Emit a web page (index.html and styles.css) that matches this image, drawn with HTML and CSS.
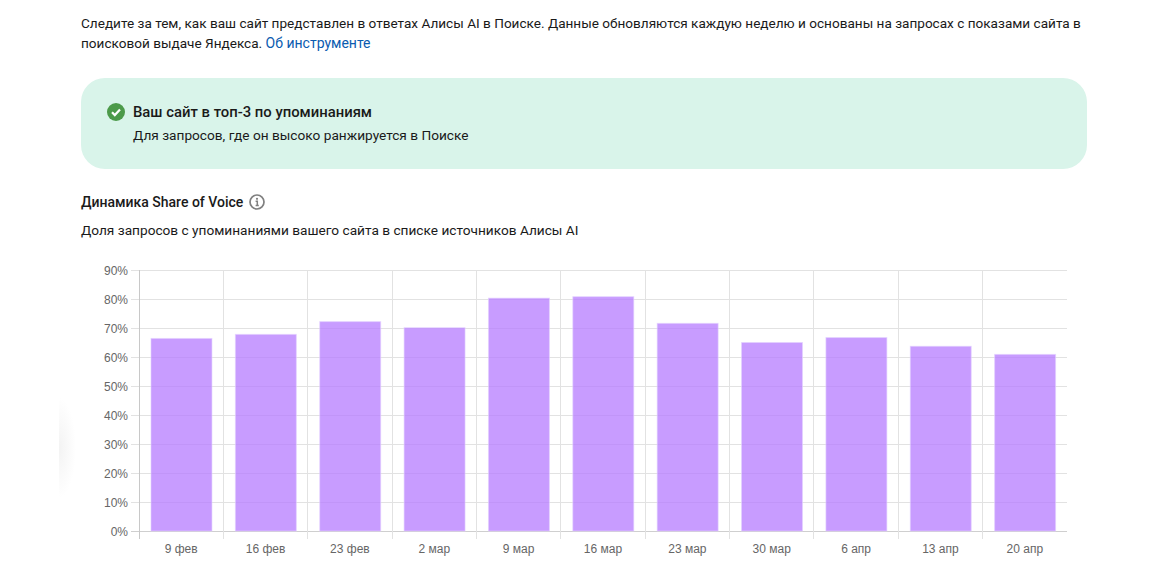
FILE: index.html
```html
<!DOCTYPE html>
<html lang="ru">
<head>
<meta charset="utf-8">
<title>Share of Voice</title>
<link rel="stylesheet" href="styles.css">
</head>
<body>
<div class="glow"></div>
<main class="page">
  <p class="intro">Следите за тем, как ваш сайт представлен в ответах Алисы AI в Поиске. Данные обновляются каждую неделю и основаны на запросах с показами сайта в поисковой выдаче Яндекса. <a href="#">Об инструменте</a></p>
  <section class="banner">
    <svg class="check" width="18" height="18" viewBox="0 0 18 18"><circle cx="9" cy="9" r="9" fill="#4c9a4a"/><path d="M5 9.3l2.8 2.8L13 6.6" fill="none" stroke="#fff" stroke-width="2.2"/></svg>
    <div class="banner-text">
      <div class="banner-title">Ваш сайт в топ-3 по упоминаниям</div>
      <div class="banner-sub">Для запросов, где он высоко ранжируется в Поиске</div>
    </div>
  </section>
  <h2 class="heading">Динамика Share of Voice
    <svg class="info" width="16" height="16" viewBox="0 0 16 16"><circle cx="8" cy="8" r="7" fill="none" stroke="#808080" stroke-width="1.700"/><circle cx="8" cy="4.800" r="1.100" fill="#808080"/><path d="M6.600 7.300H8.300V11.300M6.600 11.500H9.800" fill="none" stroke="#808080" stroke-width="1.500"/></svg>
  </h2>
  <p class="caption">Доля запросов с упоминаниями вашего сайта в списке источников Алисы AI</p>
  <svg class="chart" id="chart" width="1000" height="306" viewBox="81 260 1000 306"></svg>
</main>
<script src="chart.js"></script>
</body>
</html>
```
FILE: styles.css
```css
* { box-sizing: border-box; }
html, body { margin: 0; height: 581px; overflow: hidden; background: #fff; }
body { position: relative; font-family: "Roboto", "Noto Sans", sans-serif; color: #1a1a1a; }
.page { width: 1006px; margin-left: 81px; padding-top: 13px; }
.intro { margin: 0; font-size: 13.58px; line-height: 20px; height: 40px; }
.intro a { color: #0a5bb0; text-decoration: none; font-size: 14px; }
.banner { display: flex; align-items: flex-start; gap: 8px; margin-top: 25px; height: 91px; padding: 25px 26px; background: #d9f4ea; border-radius: 24px; }
.check { flex: none; }
.banner-title { font-size: 14.85px; font-weight: 500; line-height: 18px; }
.banner-sub { font-size: 13.67px; line-height: 18px; margin-top: 5px; }
.heading { display: flex; align-items: center; gap: 6px; margin: 23px 0 0; height: 20px; font-size: 14px; font-weight: 500; }
.caption { margin: 8px 0 0; font-size: 13.67px; line-height: 20px; }
.chart { display: block; margin-top: 20px; }
.chart text { font-family: "Liberation Sans", Arial, sans-serif; font-size: 12px; fill: #666; }
.glow { position: absolute; left: 59px; top: 398px; width: 18px; height: 100px; background: radial-gradient(ellipse 17px 50px at 0 50%, #f3f3f3, #fff); }
```
FILE: chart.js
```js
var NS = "http://www.w3.org/2000/svg";
var chart = document.getElementById("chart");
function add(tag, attrs, text) {
  var el = document.createElementNS(NS, tag);
  for (var k in attrs) el.setAttribute(k, attrs[k]);
  if (text) el.textContent = text;
  chart.appendChild(el);
}
var left = 139, right = 1067, top0 = 270, base = 531, step = 29;
var col = (right - left) / 11;
var labels = ["9 фев","16 фев","23 фев","2 мар","9 мар","16 мар","23 мар","30 мар","6 апр","13 апр","20 апр"];
var values = [66.4,67.8,72.2,70.1,80.3,80.8,71.6,65,66.7,63.7,60.9];
for (var i = 0; i <= 9; i++) {
  var y = base - i * step + 0.5;
  add("line", {x1: left - 8, x2: right, y1: y, y2: y, stroke: i ? "#e2e2e2" : "#cfcfcf"});
  add("text", {x: left - 11, y: y + 4, "text-anchor": "end"}, (i * 10) + "%");
}
for (var j = 0; j < 11; j++) {
  var x = Math.floor(left + j * col) + 0.5;
  add("line", {x1: x, x2: x, y1: top0, y2: base + 8, stroke: j ? "#e2e2e2" : "#c8c8c8"});
}
values.forEach(function (v, n) {
  var h = v / 10 * step;
  add("rect", {x: left + n * col + 12, y: base - h, width: col - 23.4, height: h, fill: "#b57bff", "fill-opacity": 0.75, stroke: "#e3d0ff", "stroke-opacity": 0.6});
  add("text", {x: left + (n + 0.5) * col, y: base + 22, "text-anchor": "middle"}, labels[n]);
});
```
